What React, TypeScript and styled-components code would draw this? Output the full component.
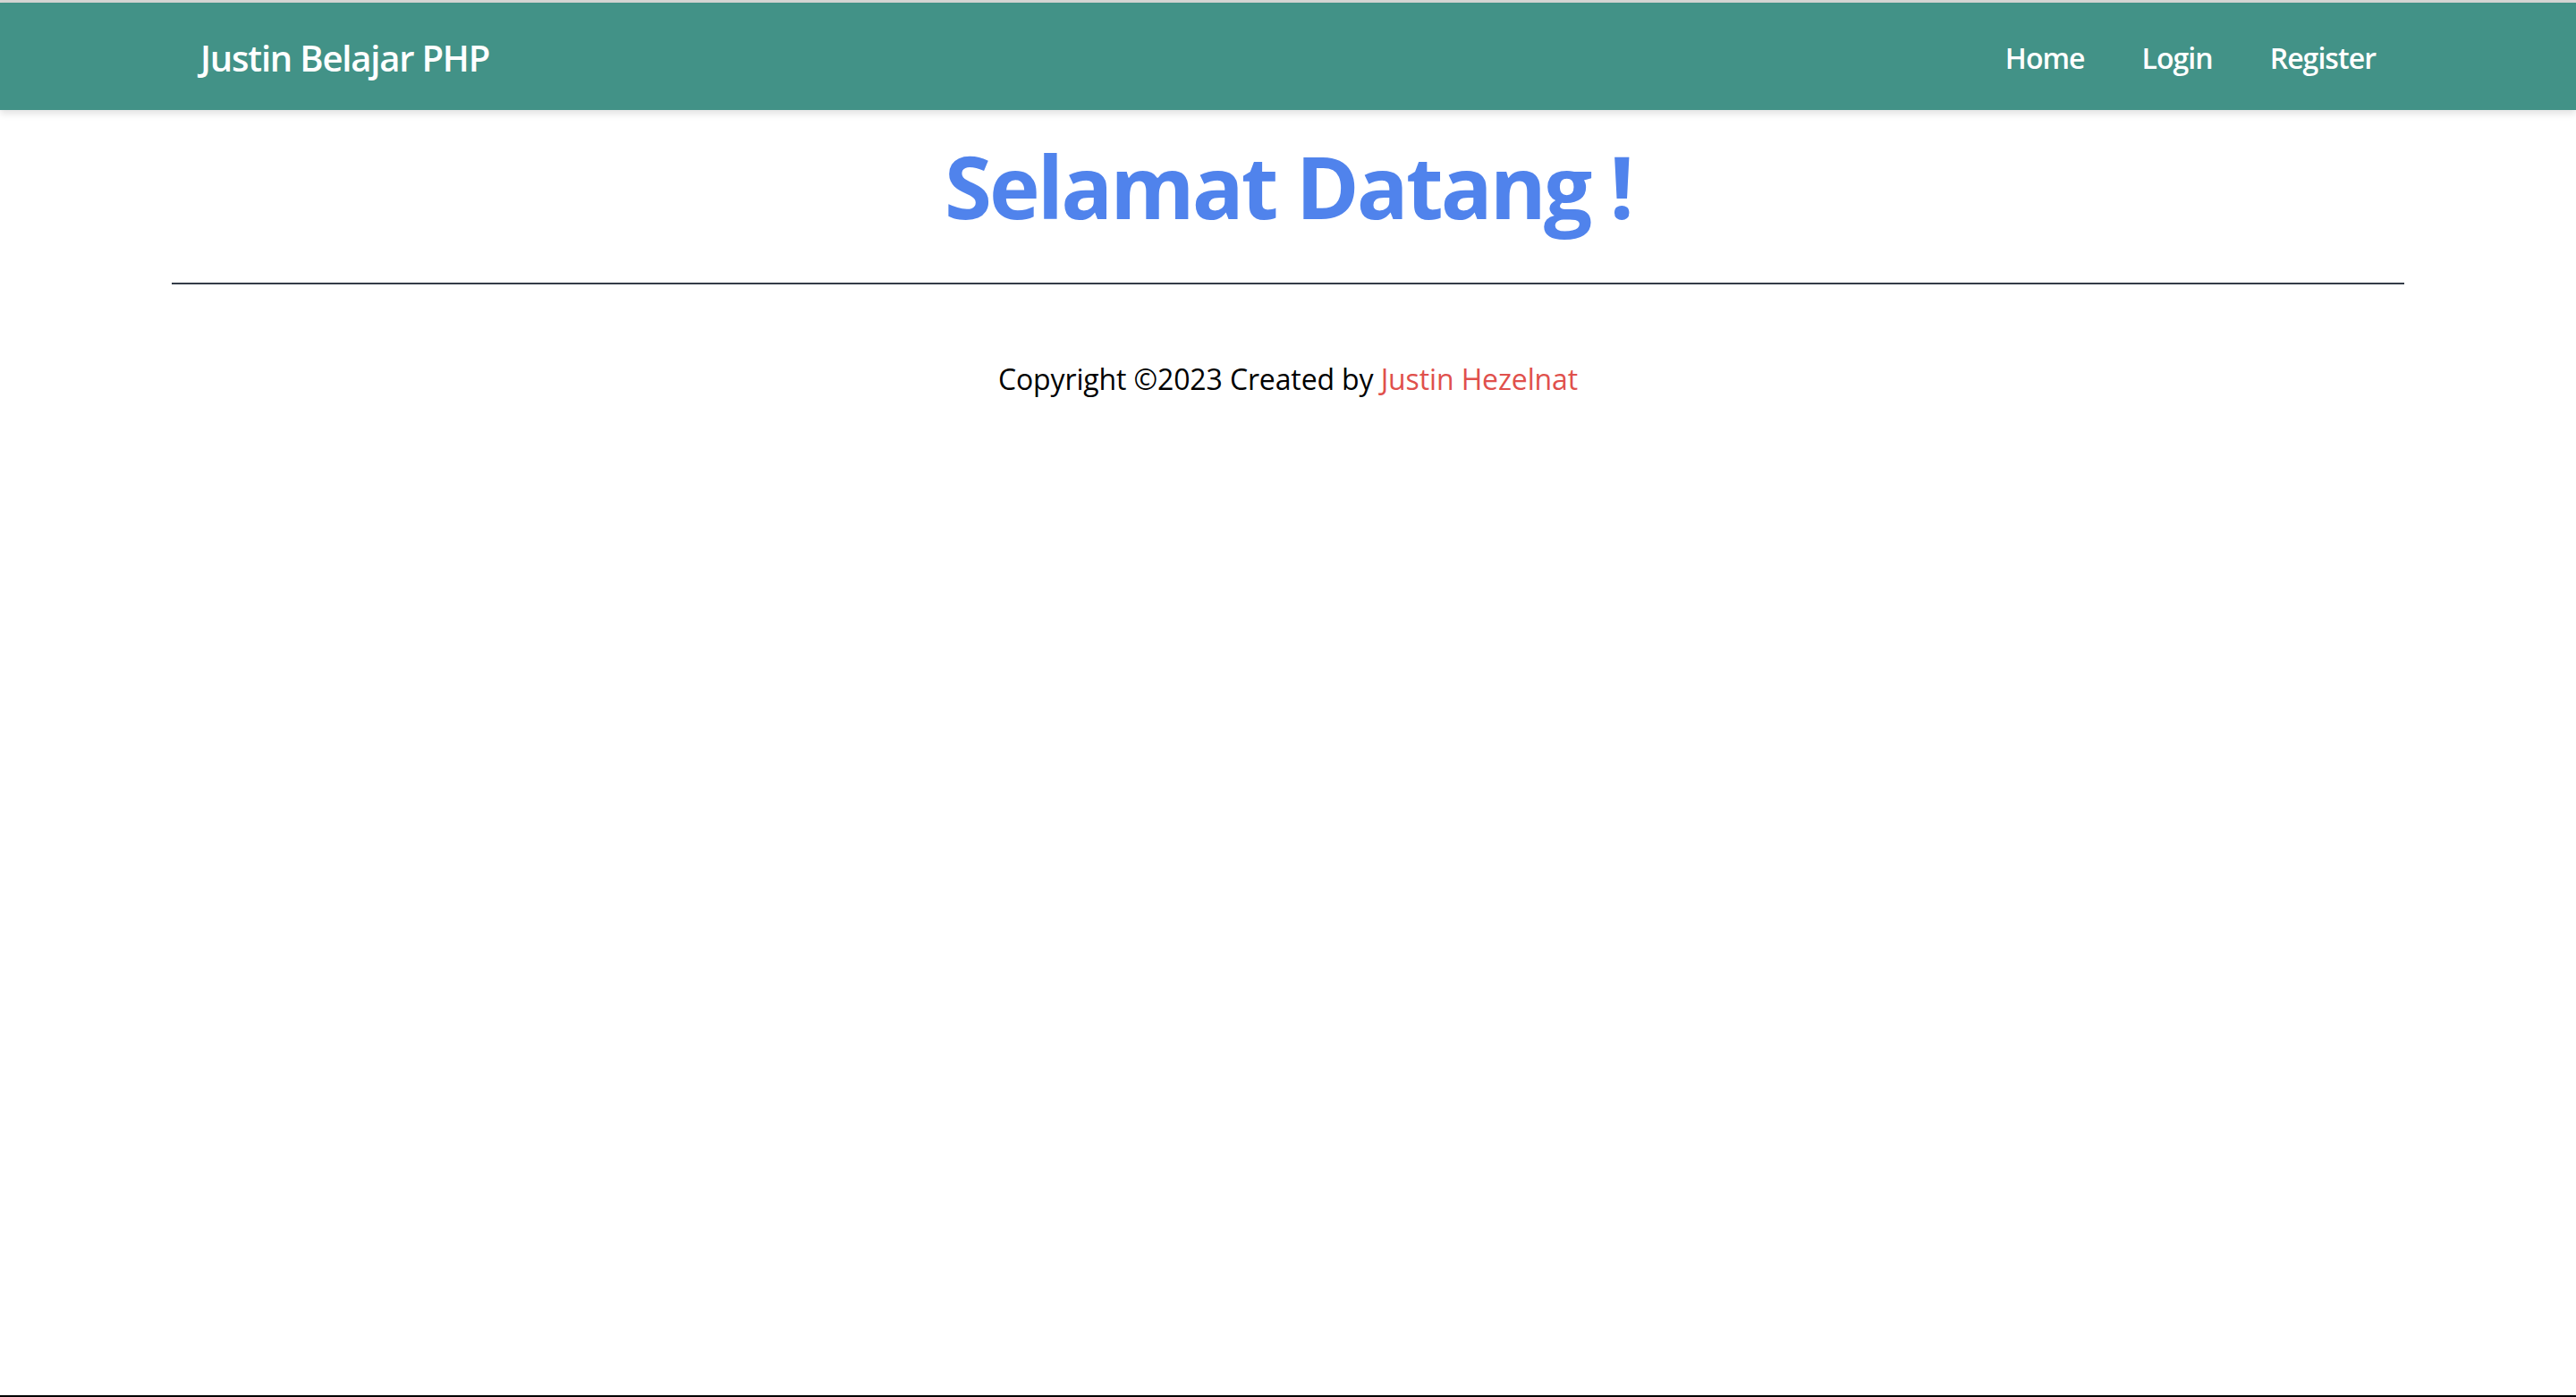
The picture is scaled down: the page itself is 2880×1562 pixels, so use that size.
import React from "react";
import styled, { createGlobalStyle } from "styled-components";

const GlobalStyle = createGlobalStyle`
  html, body {
    margin: 0;
    padding: 0;
    background: #ffffff;
  }
  * { box-sizing: border-box; }
  body {
    font-family: "Open Sans", "Noto Sans", Arial, sans-serif;
    color: #000000;
  }
`;

const Page = styled.div`
  min-height: 100vh;
  display: flex;
  flex-direction: column;
  border-top: 3px solid #d6d6d4;
  border-bottom: 2px solid #000000;
`;

const NavBar = styled.nav`
  height: 120px;
  background: #429287;
  box-shadow: 0 4px 8px rgba(0, 0, 0, 0.12);
`;

const Container = styled.div`
  max-width: 2560px;
  margin: 0 auto;
  padding: 0 32px;
  width: 100%;
`;

const NavInner = styled(Container)`
  height: 100%;
  padding-top: 3px;
  display: flex;
  align-items: center;
  justify-content: space-between;
`;

const Brand = styled.a`
  padding: 0 32px;
  color: #ffffff;
  font-size: 40px;
  font-weight: 600;
  text-decoration: none;
  letter-spacing: -0.03em;
`;

const NavLinks = styled.ul`
  list-style: none;
  margin: 0;
  padding: 0 32px;
  display: flex;
  gap: 64px;
`;

const NavLink = styled.a`
  color: #ffffff;
  font-size: 32px;
  font-weight: 600;
  text-decoration: none;
  letter-spacing: -0.03em;
`;

const Main = styled(Container)`
  display: flex;
  flex-direction: column;
  align-items: center;
`;

const Title = styled.h1`
  margin: 37px 0 0;
  font-size: 96px;
  line-height: 1;
  font-weight: 700;
  color: #5083ec;
  letter-spacing: -0.03em;
`;

const Divider = styled.hr`
  width: 100%;
  margin: 60px 0 0;
  border: none;
  border-top: 2px solid #343c48;
`;

const Footer = styled.p`
  margin: 82px 0 0;
  font-size: 32px;
  line-height: 1.5;
  letter-spacing: -0.004em;
`;

const Author = styled.span`
  color: #e0504c;
`;

export default function App() {
  return (
    <>
      <GlobalStyle />
      <Page>
        <NavBar>
          <NavInner>
            <Brand href="#">Justin Belajar PHP</Brand>
            <NavLinks>
              <li><NavLink href="#">Home</NavLink></li>
              <li><NavLink href="#">Login</NavLink></li>
              <li><NavLink href="#">Register</NavLink></li>
            </NavLinks>
          </NavInner>
        </NavBar>
        <Main>
          <Title>Selamat Datang !</Title>
          <Divider />
          <Footer>
            Copyright ©2023 Created by <Author>Justin Hezelnat</Author>
          </Footer>
        </Main>
      </Page>
    </>
  );
}
